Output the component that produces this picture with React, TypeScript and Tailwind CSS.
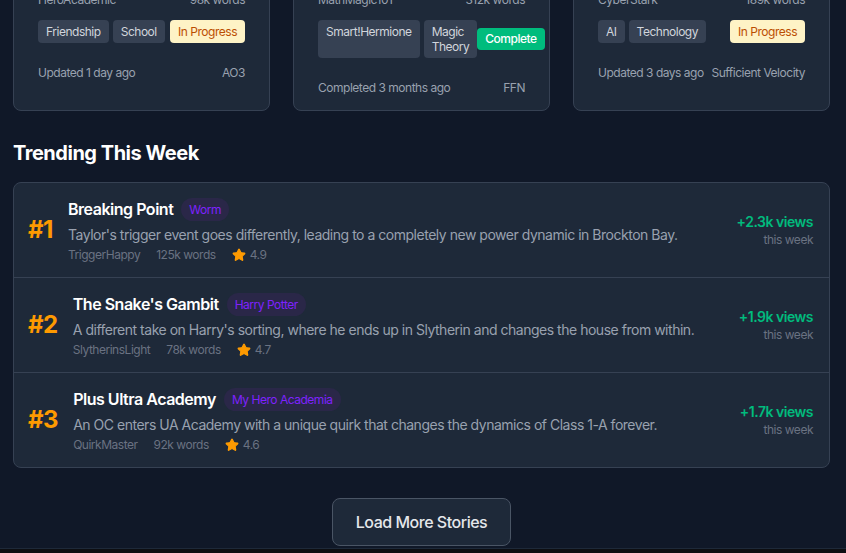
import React from 'react';
import { Star } from 'lucide-react';

interface Story {
  author: string;
  words: string;
  tags: string[];
  status: 'In Progress' | 'Complete';
  updated: string;
  site: string;
}

interface Trending {
  rank: number;
  title: string;
  fandom: string;
  summary: string;
  author: string;
  words: string;
  rating: string;
  views: string;
}

const STORIES: Story[] = [
  { author: 'HeroAcademic', words: '98k words', tags: ['Friendship', 'School'], status: 'In Progress', updated: 'Updated 1 day ago', site: 'AO3' },
  { author: 'MathMagic101', words: '312k words', tags: ['Smart!Hermione', 'Magic Theory'], status: 'Complete', updated: 'Completed 3 months ago', site: 'FFN' },
  { author: 'CyberStark', words: '189k words', tags: ['AI', 'Technology'], status: 'In Progress', updated: 'Updated 3 days ago', site: 'Sufficient Velocity' },
];

const TRENDING: Trending[] = [
  { rank: 1, title: 'Breaking Point', fandom: 'Worm', summary: "Taylor's trigger event goes differently, leading to a completely new power dynamic in Brockton Bay.", author: 'TriggerHappy', words: '125k words', rating: '4.9', views: '+2.3k views' },
  { rank: 2, title: "The Snake's Gambit", fandom: 'Harry Potter', summary: "A different take on Harry's sorting, where he ends up in Slytherin and changes the house from within.", author: 'SlytherinsLight', words: '78k words', rating: '4.7', views: '+1.9k views' },
  { rank: 3, title: 'Plus Ultra Academy', fandom: 'My Hero Academia', summary: 'An OC enters UA Academy with a unique quirk that changes the dynamics of Class 1-A forever.', author: 'QuirkMaster', words: '92k words', rating: '4.6', views: '+1.7k views' },
];

function StoryCard({ story }: { story: Story }) {
  return (
    <div className="bg-gray-800 border border-gray-700 rounded-lg px-6 pt-6 pb-[14px]">
      <div className="flex justify-between text-xs text-gray-400 mb-3">
        <span>{story.author}</span>
        <span>{story.words}</span>
      </div>
      <div className="flex justify-between items-center">
        <div className="flex gap-1">
          {story.tags.map((t) => (
            <span key={t} className="px-2 py-1 text-xs leading-[15px] bg-gray-700 text-gray-300 rounded">
              {t}
            </span>
          ))}
        </div>
        {story.status === 'Complete' ? (
          <span className="px-2 py-1 text-xs leading-[14px] font-medium bg-emerald-500 text-white rounded whitespace-nowrap">
            Complete
          </span>
        ) : (
          <span className="px-2 py-1 text-xs leading-[15px] bg-amber-100 text-amber-700 rounded whitespace-nowrap">
            In Progress
          </span>
        )}
      </div>
      <div className="flex justify-between mt-[22px] text-xs text-gray-400 whitespace-nowrap">
        <span>{story.updated}</span>
        <span>{story.site}</span>
      </div>
    </div>
  );
}

export default function App() {
  return (
    <div
      className="min-h-screen bg-gray-900 overflow-hidden tracking-[-0.03em]"
      style={{ fontFamily: 'Inter, "Noto Sans", sans-serif' }}
    >
      <main className="pl-[13px] pr-[16px] pb-[2px]">
        <div className="grid grid-cols-3 gap-[23px] -mt-[33px]">
          {STORIES.map((s) => (
            <StoryCard key={s.author} story={s} />
          ))}
        </div>

        <h2 className="mt-[28px] mb-[15px] text-xl font-bold text-white">Trending This Week</h2>

        <div className="bg-gray-800 border border-gray-700 rounded-lg divide-y divide-gray-700">
          {TRENDING.map((t) => (
            <div key={t.rank} className="flex items-center justify-between pl-[14px] pr-4 py-[14px]">
              <div className="flex items-center gap-[15px]">
                <span className="text-2xl font-bold text-amber-500">#{t.rank}</span>
                <div>
                  <div className="flex items-center gap-2 mb-[4px]">
                    <h3 className="text-base font-semibold text-white">{t.title}</h3>
                    <span className="px-2 py-1 text-xs leading-[15px] rounded-full bg-[#2a2748] text-violet-600">{t.fandom}</span>
                  </div>
                  <p className="text-sm text-gray-400 mb-[2px]">{t.summary}</p>
                  <div className="flex items-center gap-4 text-xs text-gray-500">
                    <span>{t.author}</span>
                    <span>{t.words}</span>
                    <span className="flex items-center gap-1">
                      <Star size={14} className="text-amber-500 fill-amber-500" />
                      {t.rating}
                    </span>
                  </div>
                </div>
              </div>
              <div className="text-right shrink-0">
                <div className="text-sm font-semibold text-emerald-500">{t.views}</div>
                <div className="text-xs text-gray-500">this week</div>
              </div>
            </div>
          ))}
        </div>

        <div className="flex justify-center mt-[30px]">
          <button className="px-[23px] py-[11px] bg-gray-800 border border-gray-600 rounded-lg text-base font-medium text-gray-200">
            Load More Stories
          </button>
        </div>
      </main>
      <footer className="h-20 bg-[#0d0e12] border-t border-gray-800" />
    </div>
  );
}
